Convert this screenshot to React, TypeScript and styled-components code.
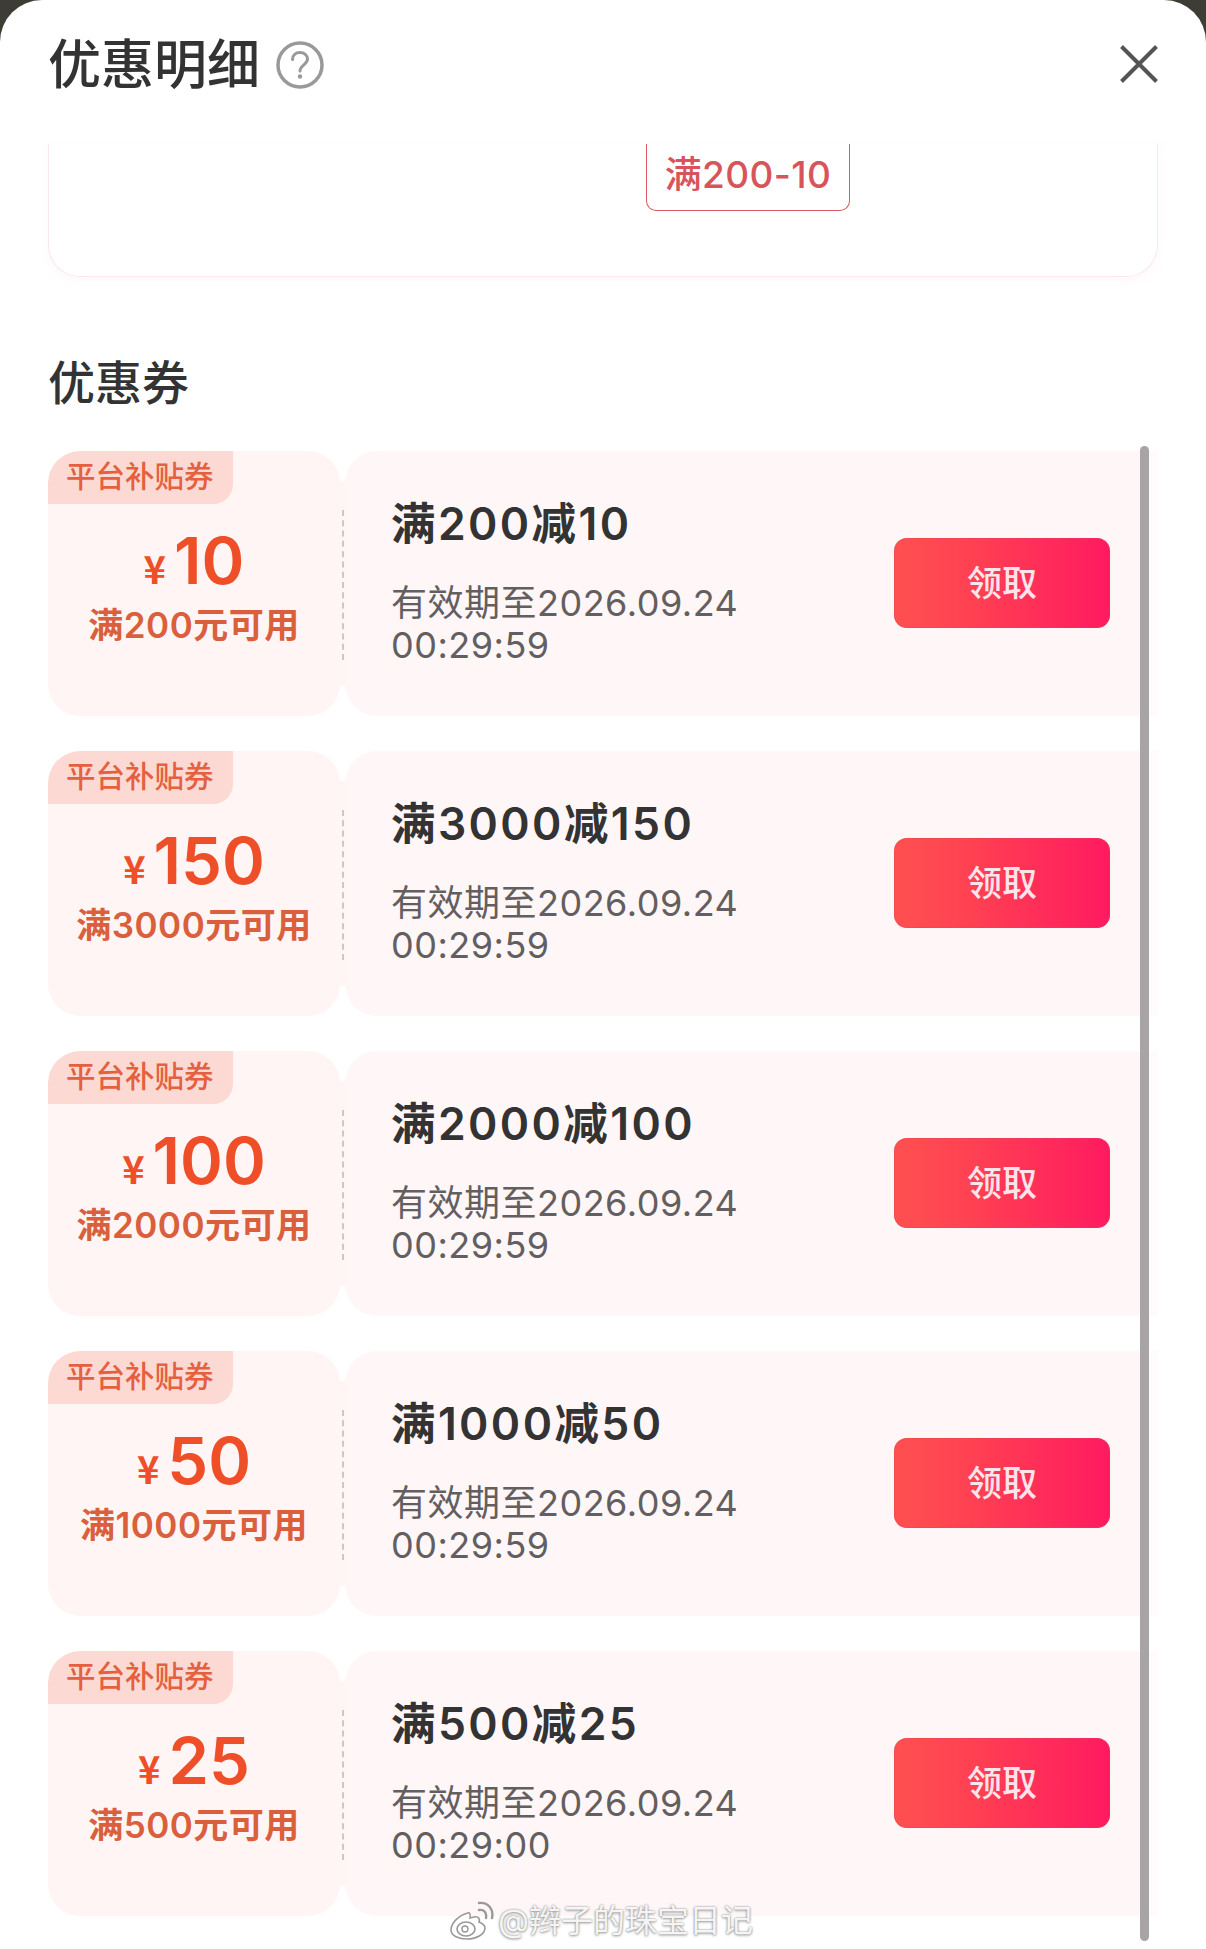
import React from "react";
import styled, { createGlobalStyle } from "styled-components";

const Global = createGlobalStyle`
  html, body { margin: 0; padding: 0; background: #3d3d35; }
  * { box-sizing: border-box; }
  body { font-family: Inter, "Noto Sans CJK SC", sans-serif; }
`;

const Sheet = styled.div`
  position: relative;
  width: 1206px;
  height: 1949px;
  overflow: hidden;
  background: #fff;
  border-radius: 42px 42px 0 0;
`;

const Header = styled.header`
  height: 144px;
  padding: 27px 48px 0;
  display: flex;
  align-items: flex-start;
  justify-content: space-between;
`;

const TitleGroup = styled.div`
  display: flex;
  align-items: center;
  gap: 16px;
`;

const SheetTitle = styled.h1`
  margin: 0;
  font-size: 53px;
  line-height: 76px;
  font-weight: 500;
  color: #333;
`;

const CloseIcon = styled.svg`
  width: 38px;
  height: 38px;
  margin-top: 18px;
`;

const Content = styled.div`
  padding: 0 48px;
`;

const RulesCard = styled.section`
  height: 133px;
  border: 1px solid #fbe9ec;
  border-top: none;
  border-radius: 0 0 32px 32px;
  box-shadow: 0 3px 8px rgba(250, 225, 230, 0.25);
  padding-left: 597px;
`;

const RuleTag = styled.div`
  width: 204px;
  height: 67px;
  border: 1.5px solid #dc5a62;
  border-top: none;
  border-radius: 0 0 10px 10px;
  color: #d9535b;
  font-size: 37px;
  font-weight: 500;
  line-height: 62px;
  letter-spacing: 0.4px;
  text-align: center;
  white-space: nowrap;
`;

const SectionTitle = styled.h2`
  margin: 72px 0 0;
  height: 102px;
  font-size: 47px;
  line-height: 68px;
  font-weight: 500;
  color: #333;
`;

const List = styled.div`
  display: flex;
  flex-direction: column;
  gap: 35px;
`;

const Coupon = styled.article`
  display: flex;
  height: 265px;
`;

const Stub = styled.div`
  width: 292px;
  border-radius: 32px;
  background: #fff5f5;
  display: flex;
  flex-direction: column;
  align-items: center;
  overflow: hidden;
`;

const Badge = styled.div`
  align-self: flex-start;
  width: 185px;
  height: 53px;
  background: #fdd9d3;
  border-radius: 32px 0 20px 0;
  color: #e4603f;
  font-size: 29.5px;
  font-weight: 500;
  line-height: 50px;
  padding-left: 18px;
  white-space: nowrap;
`;

const Amount = styled.div`
  margin-top: 18px;
  display: flex;
  align-items: baseline;
  color: #ee4f28;
  height: 78px;
  line-height: 78px;
  font-weight: 600;
`;

const Currency = styled.span`
  font-size: 38px;
  font-weight: 700;
  margin-right: 8px;
  font-family: "Noto Sans CJK SC", sans-serif;
`;

const Value = styled.span`
  font-size: 65px;
`;

const Condition = styled.div`
  margin-top: 0;
  color: #da5f3d;
  font-size: 35px;
  line-height: 50px;
  font-weight: 600;
  white-space: nowrap;
  letter-spacing: 0.5px;
`;

const Divider = styled.div`
  width: 5px;
  margin: 30px 0;
  padding: 29px 0 26px;
  background: #fff5f5;
  display: flex;
  justify-content: center;
`;

const Dash = styled.div`
  border-left: 2px dashed #cfc4c6;
`;

const Body = styled.div`
  flex: 1;
  border-radius: 32px 0 0 32px;
  background: linear-gradient(90deg, #fff6f7 calc(100% - 18px), #fffafb calc(100% - 18px));
  padding: 0 48px 2px 46px;
  display: flex;
  align-items: center;
  justify-content: space-between;
`;

const Info = styled.div`
  align-self: flex-start;
  padding-top: 43px;
`;

const CouponTitle = styled.div`
  font-size: 44.5px;
  line-height: 60px;
  font-weight: 600;
  color: #333;
  letter-spacing: 2.4px;
  white-space: nowrap;
`;

const Validity = styled.div`
  margin-top: 28px;
  width: 370px;
  font-size: 36px;
  line-height: 42px;
  color: #635e5f;
  letter-spacing: 0.5px;
`;

const ClaimButton = styled.button`
  width: 216px;
  height: 90px;
  border: none;
  border-radius: 13px;
  background: linear-gradient(90deg, #ff5050 0%, #ff4152 35%, #ff1a60 100%);
  box-shadow: inset 0 0 0 1px rgba(220, 70, 90, 0.35);
  color: #fde3ea;
  font-family: inherit;
  font-size: 35px;
  font-weight: 500;
  padding: 0 0 4px;
`;

const ScrollThumb = styled.div`
  position: absolute;
  left: 1140px;
  top: 446px;
  width: 9px;
  height: 1495px;
  border-radius: 5px;
  background: #a8a4a5;
`;

const Watermark = styled.div`
  position: absolute;
  left: 449px;
  top: 1899px;
  display: flex;
  align-items: center;
  gap: 3px;
  color: rgba(255, 255, 255, 0.92);
  font-size: 32px;
  line-height: 44px;
  text-shadow: 0 0 2px #8a8a8a, 0 1px 3px #a0a0a0;
`;

const coupons = [
  { value: "10", min: "200", title: "满200减10", time: "00:29:59" },
  { value: "150", min: "3000", title: "满3000减150", time: "00:29:59" },
  { value: "100", min: "2000", title: "满2000减100", time: "00:29:59" },
  { value: "50", min: "1000", title: "满1000减50", time: "00:29:59" },
  { value: "25", min: "500", title: "满500减25", time: "00:29:00" },
];

const HelpIcon = () => (
  <svg width="48" height="48" viewBox="0 0 48 48" fill="none" aria-hidden="true">
    <circle cx="24" cy="24" r="22" stroke="#999" strokeWidth="3.5" />
    <path d="M16.5 18.5c0-4.4 3.3-7 7.5-7s7.5 2.7 7.5 6.6c0 5.5-7.5 6-7.5 11.9" stroke="#999" strokeWidth="3" strokeLinecap="round" />
    <circle cx="24" cy="35.5" r="2.2" fill="#999" />
  </svg>
);

const WeiboIcon = () => (
  <svg width="46" height="40" viewBox="0 0 46 40" fill="none" aria-hidden="true">
    <path d="M19 12C10 14 2 22 2 29c0 6 8 9 16 9 10 0 18-5 18-11 0-4-4-5-6-6 1-3 0-6-5-5l-4 1c1-4-1-6-2-5z" fill="#fff" stroke="#999" strokeWidth="1.6" />
    <ellipse cx="17" cy="28" rx="9" ry="7" fill="#fff" stroke="#999" strokeWidth="1.6" />
    <circle cx="16" cy="28" r="3" stroke="#999" strokeWidth="1.4" />
    <path d="M30 9c5-1 8 3 7 8M30 2c9-1 15 6 13 15" stroke="#999" strokeWidth="2.4" strokeLinecap="round" />
  </svg>
);

export default function App() {
  return (
    <>
      <Global />
      <Sheet>
        <Header>
          <TitleGroup>
            <SheetTitle>优惠明细</SheetTitle>
            <HelpIcon />
          </TitleGroup>
          <CloseIcon viewBox="0 0 38 38" fill="none" aria-hidden="true">
            <path d="M1.5 1.5l35 35M36.5 1.5l-35 35" stroke="#555" strokeWidth="4" />
          </CloseIcon>
        </Header>
        <Content>
          <RulesCard>
            <RuleTag>满200-10</RuleTag>
          </RulesCard>
          <SectionTitle>优惠券</SectionTitle>
          <List>
            {coupons.map((c) => (
              <Coupon key={c.title}>
                <Stub>
                  <Badge>平台补贴券</Badge>
                  <Amount>
                    <Currency>¥</Currency>
                    <Value>{c.value}</Value>
                  </Amount>
                  <Condition>满{c.min}元可用</Condition>
                </Stub>
                <Divider>
                  <Dash />
                </Divider>
                <Body>
                  <Info>
                    <CouponTitle>{c.title}</CouponTitle>
                    <Validity>有效期至2026.09.24 {c.time}</Validity>
                  </Info>
                  <ClaimButton>领取</ClaimButton>
                </Body>
              </Coupon>
            ))}
          </List>
        </Content>
        <ScrollThumb />
        <Watermark>
          <WeiboIcon />
          @辫子的珠宝日记
        </Watermark>
      </Sheet>
    </>
  );
}
